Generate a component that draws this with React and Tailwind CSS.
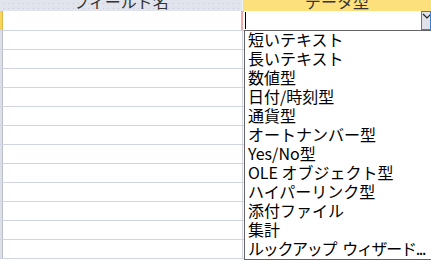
import React from "react";

const items = [
  "短いテキスト",
  "長いテキスト",
  "数値型",
  "日付/時刻型",
  "通貨型",
  "オートナンバー型",
  "Yes/No型",
  "OLE オブジェクト型",
  "ハイパーリンク型",
  "添付ファイル",
  "集計",
];

export default function App() {
  const rows = Array.from({ length: 12 });
  return (
    <div
      className="relative w-[431px] h-[261px] overflow-hidden bg-white text-black"
      style={{ fontFamily: '"Noto Sans CJK JP", "Noto Sans", sans-serif' }}
    >
      {/* header */}
      <div className="flex h-[11px] overflow-hidden">
        <div className="w-[242px] h-full bg-[#e1e4ec] bg-[radial-gradient(#c7cbd6_0.8px,transparent_0.9px)] bg-[length:5px_5px] bg-[position:1px_1px] flex justify-center overflow-hidden">
          <span className="text-[16px] leading-[16px] -mt-[7px] text-[#333] whitespace-nowrap">フィールド名</span>
        </div>
        <div className="w-px h-full bg-[#eef0f4]" />
        <div className="flex-1 h-full bg-[#fce07c] flex justify-center overflow-hidden">
          <span className="text-[16px] leading-[16px] -mt-[7px] text-[#333] whitespace-nowrap">データ型</span>
        </div>
      </div>

      {/* first (current) row */}
      <div className="flex h-[20px] border-b border-[#cfd4e0]">
        <div className="w-[3px] h-full bg-[#f8d45a] border-r border-[#d9b84a]" />
        <div className="w-[238px] h-full" />
        <div className="flex-1 h-full border-l-2 border-t border-[#f4a7a7]" />
      </div>

      {/* other rows */}
      {rows.map((_, i) => (
        <div key={i} className="flex h-[19px] border-b border-[#cfd4e0]">
          <div className="w-[3px] h-full bg-[#dde0e8] border-r border-[#b9bfcc]" />
          <div className="w-[239px] h-full" />
          <div className="flex-1 h-full border-l border-[#cfd4e0]" />
        </div>
      ))}

      {/* combo box with open list */}
      <div className="absolute left-[244px] top-[11px] right-0">
        <div className="flex h-[20px] border-b border-[#646464] bg-white">
          <div className="ml-[1px] mt-[1px] w-px h-[17px] bg-black" />
          <div className="flex-1" />
          <div className="w-[10px] h-[19px] border border-[#3b7fd4] bg-[#dfe2e8] bg-[radial-gradient(#c3c7cf_0.6px,transparent_0.7px)] bg-[length:2px_2px] overflow-hidden">
            <svg width="10" height="10" viewBox="0 0 10 10" className="block">
              <path d="M1 2 L5 6 L9 2" fill="none" stroke="#222" strokeWidth="1.2" />
            </svg>
          </div>
        </div>
        <div className="border-l border-b border-[#646464] bg-white pl-[3px]">
          {items.map((t) => (
            <div key={t} className="h-[19px] text-[16px] leading-[17px] whitespace-nowrap">
              {t}
            </div>
          ))}
          <div className="flex h-[19px] text-[16px] leading-[17px] whitespace-nowrap tracking-[-1.3px]">
            <span>ルックアップ</span>
            <span className="ml-[6px]">ウィザード...</span>
          </div>
        </div>
      </div>
    </div>
  );
}
